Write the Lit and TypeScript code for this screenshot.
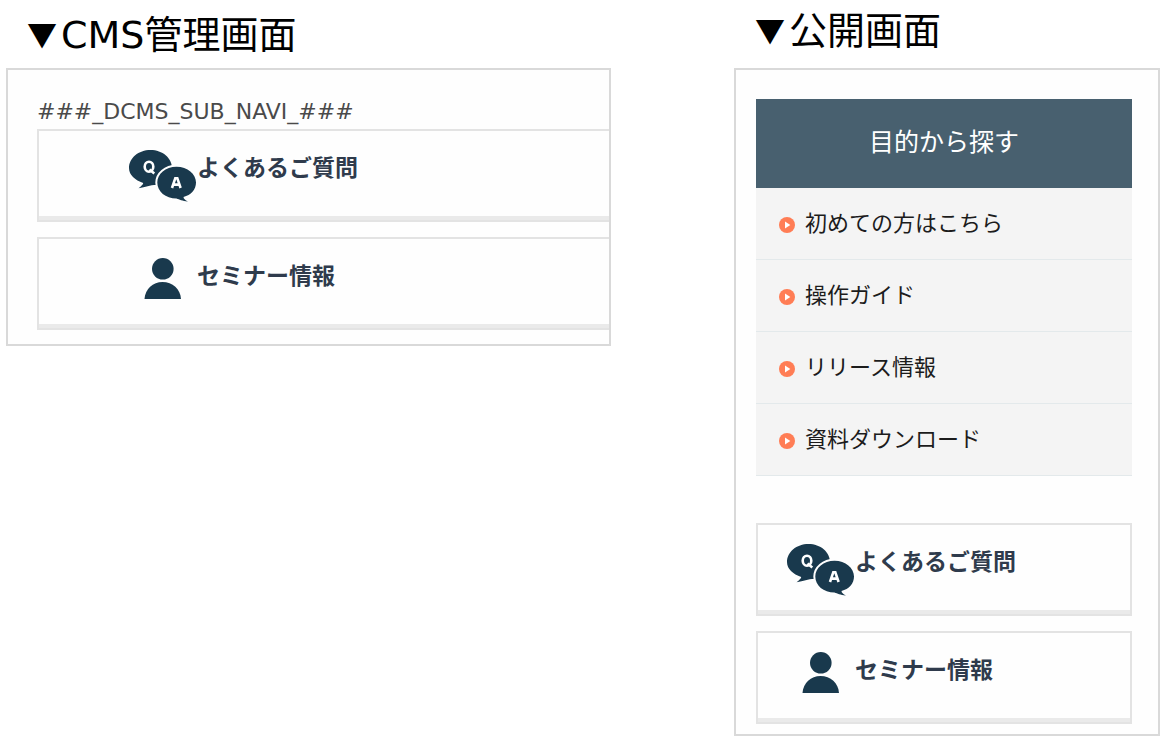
import { LitElement, html, css } from "lit";
import { customElement, property } from "lit/decorators.js";

const qaIcon = html`<svg class="icon" viewBox="0 0 68 52" width="68" height="52" aria-hidden="true">
  <path fill="#19394d" d="M21.500 0C33.500 0 43 8 43 18C43 27.500 37.500 34.500 27.500 35C20.500 35 17 37.300 9.500 38.300C12.500 36 14 34.500 14.200 33C6 30 0 25 0 18C0 8 9.500 0 21.500 0Z"/>
  <path fill="#19394d" stroke="#fefefe" stroke-width="4" paint-order="stroke" d="M47.500 16.700C58.500 16.700 67 24 67 32.500C67 39.500 62 45 54.500 47C54.500 48.500 56 50 59 51.500C53 51 50.500 49.500 47.500 48.500C36.500 48.500 28.300 41.500 28.300 32.500C28.300 24 36.500 16.700 47.500 16.700Z"/>
  <g fill="none" stroke="#fff" stroke-width="2.600">
    <ellipse cx="20" cy="16.700" rx="4.300" ry="5"/>
    <path d="M20.500 19.500L25.300 23.500"/>
    <path d="M43 38L46.300 28.200H48.300L51.600 38M44.500 34.600H50"/>
  </g>
</svg>`;

const personIcon = html`<svg class="icon" viewBox="0 0 68 52" width="68" height="52" aria-hidden="true">
  <g fill="#19394d">
    <circle cx="33.800" cy="10.800" r="10.800"/>
    <path d="M15.500 41C16 31 24 24 33.500 24C43.500 24 51.500 31 52 41Z"/>
  </g>
</svg>`;

const bulletIcon = html`<svg class="bullet" viewBox="0 0 16 16" width="16" height="16" aria-hidden="true">
  <circle cx="8" cy="8" r="8" fill="#ff7d55"/>
  <path d="M6 4.500L11.300 8L6 11.500Z" fill="#fff"/>
</svg>`;

const banners = [
  { label: "よくあるご質問", icon: qaIcon },
  { label: "セミナー情報", icon: personIcon },
];

@customElement("banner-list")
class BannerList extends LitElement {
  @property({ type: Boolean, reflect: true }) wide = false;

  static styles = css`
    :host {
      display: flex;
      flex-direction: column;
      gap: 15px;
    }
    .banner {
      display: flex;
      align-items: flex-start;
      padding: 19px 29px 18px;
      border: 2px solid #e3e3e3;
      box-shadow: inset 0 -4px #eaeaea;
      color: #2f3b4c;
      font-size: 23px;
      font-weight: 700;
      line-height: 32px;
      white-space: nowrap;
      text-decoration: none;
    }
    :host([wide]) .banner {
      padding-left: 90px;
      border-right: 0;
    }
    .icon {
      flex: none;
    }
  `;

  render() {
    return banners.map(
      (b) => html`<a class="banner" href="#">${b.icon}<span>${b.label}</span></a>`
    );
  }
}

@customElement("purpose-menu")
class PurposeMenu extends LitElement {
  private items = ["初めての方はこちら", "操作ガイド", "リリース情報", "資料ダウンロード"];

  static styles = css`
    :host {
      display: block;
    }
    .title {
      margin: 0;
      padding: 23px 0 30px;
      background: #48606f;
      color: #fff;
      font-size: 25px;
      font-weight: 400;
      line-height: 36px;
      text-align: center;
    }
    .list {
      margin: 0;
      padding: 0;
      list-style: none;
    }
    .link {
      display: flex;
      align-items: flex-start;
      gap: 10px;
      padding: 15px 23px 20px;
      border-bottom: 1px solid #e3e9eb;
      background: #f4f4f4;
      color: #1c1c1c;
      font-size: 22px;
      line-height: 36px;
      text-decoration: none;
    }
    .bullet {
      flex: none;
      margin-top: 14px;
    }
  `;

  render() {
    return html`
      <h2 class="title">目的から探す</h2>
      <ul class="list">
        ${this.items.map((t) => html`<li><a class="link" href="#">${bulletIcon}<span>${t}</span></a></li>`)}
      </ul>
    `;
  }
}

@customElement("app-root")
class AppRoot extends LitElement {
  static styles = css`
    :host {
      display: block;
      background: #fff;
      font-family: "Noto Sans CJK JP", sans-serif;
    }
    .page {
      display: grid;
      grid-template-columns: minmax(0, 605fr) minmax(0, 426fr);
      column-gap: 123px;
      align-items: start;
      padding-left: 6px;
    }
    .heading {
      margin: 0;
      padding: 4px 21px 8px;
      color: #000;
      font-size: 38px;
      font-weight: 400;
      line-height: 56px;
      white-space: nowrap;
    }
    .public .heading {
      padding: 0 21px 12px;
    }
    .mark {
      margin-right: 4px;
      font-size: 30px;
      line-height: 1;
      vertical-align: 2px;
    }
    .latin {
      font-family: "DejaVu Sans", sans-serif;
      line-height: 1;
    }
    .panel {
      border: 2px solid #d9d9d9;
      background: #fefefe;
    }
    .cms .panel {
      padding: 26px 0 14px 29px;
    }
    .public .panel {
      padding: 29px 26px 10px 20px;
    }
    .token {
      margin: 0;
      padding-bottom: 1px;
      color: #4a4a4a;
      font-family: "DejaVu Sans", sans-serif;
      font-size: 22px;
      line-height: 32px;
    }
    .menu {
      margin-bottom: 47px;
    }
  `;

  render() {
    return html`
      <main class="page">
        <section class="cms">
          <h1 class="heading"><span class="mark">▼</span><span class="latin">CMS</span>管理画面</h1>
          <div class="panel">
            <p class="token">###_DCMS_SUB_NAVI_###</p>
            <banner-list wide></banner-list>
          </div>
        </section>
        <section class="public">
          <h1 class="heading"><span class="mark">▼</span>公開画面</h1>
          <div class="panel">
            <purpose-menu class="menu"></purpose-menu>
            <banner-list></banner-list>
          </div>
        </section>
      </main>
    `;
  }
}
